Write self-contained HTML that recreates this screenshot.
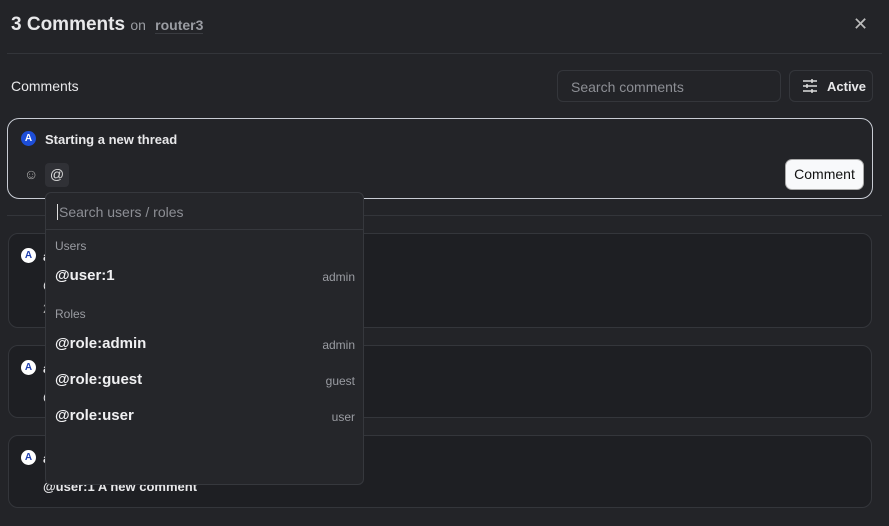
<!DOCTYPE html><html><head><style>
body{margin:0;width:889px;height:526px;background:#232428;font-family:"Liberation Sans",sans-serif;color:#e8e8ea;position:relative;overflow:hidden}
.a{position:absolute}
.card{position:absolute;left:8px;width:862px;background:#1e1f23;border:1px solid #34363b;border-radius:10px}
.av{position:absolute;width:15px;height:15px;border-radius:50%;background:#fff;color:#1f3fae;font-size:10px;font-weight:bold;text-align:center;line-height:15px}
.it{position:absolute;left:9px;right:8px;font-size:15px;font-weight:bold;color:#f0f0f2}
.it span{position:absolute;right:0;font-size:12px;font-weight:normal;color:#9a9ca2;top:3px}
.nm{position:absolute;left:34px;font-size:13px;font-weight:bold}
</style></head><body>
<div class="a" style="left:11px;top:14px;font-size:19px;font-weight:bold">3 Comments <span style="font-size:14px;font-weight:normal;color:#9a9ca2">on</span> <span style="font-size:14px;font-weight:bold;color:#9a9ca2;border-bottom:1px solid #3a3c41;margin-left:4px">router3</span></div>
<div class="a" style="left:853px;top:14px;font-size:18px;color:#bbb">✕</div>
<div class="a" style="left:7px;top:53px;width:875px;height:1px;background:#33353a"></div>
<div class="a" style="left:11px;top:78px;font-size:14px">Comments</div>
<div class="a" style="left:557px;top:70px;width:222px;height:30px;border:1px solid #34363b;border-radius:6px;background:#232428"><span style="position:absolute;left:13px;top:8px;font-size:14px;color:#8d8f95">Search comments</span></div>
<div class="a" style="left:789px;top:70px;width:82px;height:30px;border:1px solid #34363b;border-radius:6px">
<svg class="a" style="left:12px;top:8px" width="16" height="14" viewBox="0 0 16 14" stroke="#ddd" stroke-width="1.5"><path d="M1 2h14M1 7h14M1 12h14"/><path d="M10 0v4M5 5v4M10 10v4" /></svg>
<span style="position:absolute;left:37px;top:8px;font-size:13px;font-weight:bold">Active</span></div>
<div class="a" style="left:7px;top:118px;width:864px;height:79px;border:1px solid #c8ccd4;border-radius:12px"></div>
<div class="av" style="left:21px;top:131px;background:#1d4ed8;color:#fff">A</div>
<div class="a" style="left:45px;top:132px;font-size:13px;font-weight:bold">Starting a new thread</div>
<div class="a" style="left:24px;top:166px;font-size:14px;color:#aaa">☺</div>
<div class="a" style="left:45px;top:163px;width:24px;height:24px;background:#303136;border-radius:4px;text-align:center;line-height:23px;font-size:14px;color:#ddd">@</div>
<div class="a" style="left:785px;top:159px;width:79px;height:31px;background:#f8f9fb;border:1px solid #aaa;border-radius:7px;box-sizing:border-box;color:#111;font-size:14px;text-align:center;line-height:29px">Comment</div>
<div class="a" style="left:7px;top:215px;width:875px;height:1px;background:#33353a"></div>
<div class="card" style="top:233px;height:93px"><div class="av" style="left:12px;top:14px">A</div><div class="nm" style="top:15px">admin</div><div class="nm" style="top:43px">@user:1 reply</div><div class="nm" style="top:67px;font-weight:normal;color:#aaa">2 replies</div></div>
<div class="card" style="top:345px;height:71px"><div class="av" style="left:12px;top:14px">A</div><div class="nm" style="top:15px">admin</div><div class="nm" style="top:43px">@user:1 comment</div></div>
<div class="card" style="top:435px;height:71px"><div class="av" style="left:12px;top:14px">A</div><div class="nm" style="top:15px">admin</div><div class="nm" style="top:43px">@user:1 A new comment</div></div>
<div class="a" style="left:45px;top:192px;width:319px;height:293px;background:#25262a;border:1px solid #36383d;border-radius:6px;box-sizing:border-box">
<div class="a" style="left:0;right:0;top:0;height:36px;border-bottom:1px solid #36383d"><span style="position:absolute;left:11px;top:11px;font-size:14px;color:#8d8f95;border-left:1px solid #ddd;padding-left:1px">Search users / roles</span></div>
<div class="a" style="left:9px;top:46px;font-size:12px;color:#9a9ca2">Users</div>
<div class="it" style="top:74px">@user:1<span>admin</span></div>
<div class="a" style="left:9px;top:114px;font-size:12px;color:#9a9ca2">Roles</div>
<div class="it" style="top:142px">@role:admin<span>admin</span></div>
<div class="it" style="top:178px">@role:guest<span>guest</span></div>
<div class="it" style="top:214px">@role:user<span>user</span></div>
</div>
</body></html>
